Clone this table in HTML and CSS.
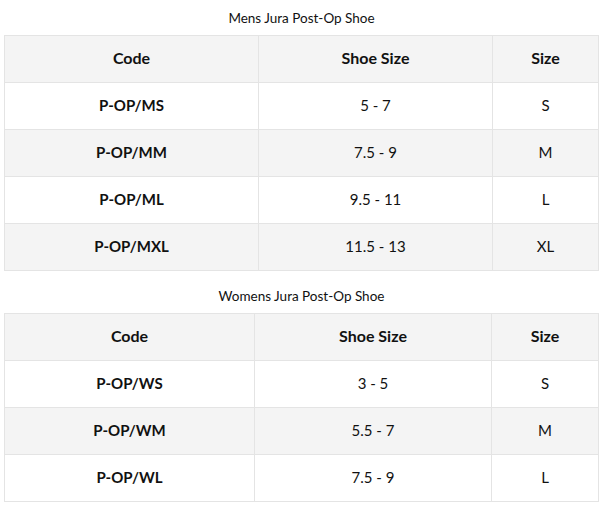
FILE: index.html
```html
<!DOCTYPE html>
<html>
<head>
<meta charset="utf-8">
<link rel="stylesheet" href="styles.css">
</head>
<body>
<div class="page">
  <section class="chart">
    <h2 class="title">Mens Jura Post-Op Shoe</h2>
    <table class="size-table">
      <colgroup><col class="c1 m"><col class="c2 m"><col class="c3"></colgroup>
      <tr><th>Code</th><th>Shoe Size</th><th>Size</th></tr>
      <tr><td class="code">P-OP/MS</td><td>5 - 7</td><td>S</td></tr>
      <tr><td class="code">P-OP/MM</td><td>7.5 - 9</td><td>M</td></tr>
      <tr><td class="code">P-OP/ML</td><td>9.5 - 11</td><td>L</td></tr>
      <tr><td class="code">P-OP/MXL</td><td>11.5 - 13</td><td>XL</td></tr>
    </table>
  </section>
  <section class="chart">
    <h2 class="title">Womens Jura Post-Op Shoe</h2>
    <table class="size-table">
      <colgroup><col class="c1 w"><col class="c2 w"><col class="c3"></colgroup>
      <tr><th>Code</th><th>Shoe Size</th><th>Size</th></tr>
      <tr><td class="code">P-OP/WS</td><td>3 - 5</td><td>S</td></tr>
      <tr><td class="code">P-OP/WM</td><td>5.5 - 7</td><td>M</td></tr>
      <tr><td class="code">P-OP/WL</td><td>7.5 - 9</td><td>L</td></tr>
    </table>
  </section>
</div>
</body>
</html>
```
FILE: styles.css
```css
html, body {
  margin: 0;
  padding: 0;
  background: #fff;
}
body {
  font-family: Lato, "Open Sans", sans-serif;
  color: #111;
}
.page {
  padding: 9px 3px 0 4px;
  display: flex;
  flex-direction: column;
  gap: 16px;
}
.chart {
  display: flex;
  flex-direction: column;
  gap: 8px;
}
.title {
  margin: 0;
  font-size: 13.5px;
  font-weight: 400;
  text-align: center;
  line-height: 18px;
}
.size-table {
  width: 595px;
  border-collapse: collapse;
  table-layout: fixed;
}
.c1.m { width: 254px; }
.c2.m { width: 234px; }
.c1.w { width: 250px; }
.c2.w { width: 237px; }
.size-table th,
.size-table td {
  border: 1px solid #e4e4e4;
  height: 47px;
  padding: 0 0 2px;
  box-sizing: border-box;
  text-align: center;
  vertical-align: middle;
  font-size: 15px;
}
.size-table th {
  font-weight: 700;
  font-size: 16px;
  padding-bottom: 4px;
}
.size-table td.code {
  font-weight: 700;
}
.size-table tr:nth-child(odd) {
  background: #f4f4f4;
}
```
